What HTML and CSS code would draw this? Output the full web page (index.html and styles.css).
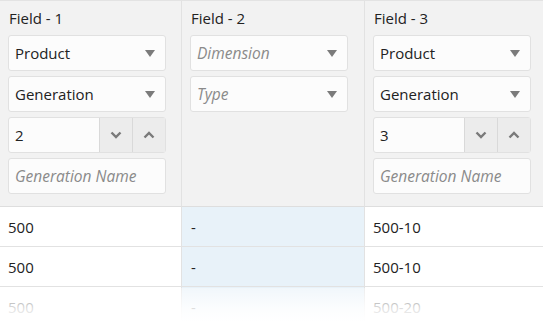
FILE: index.html
```html
<!DOCTYPE html>
<html lang="en">
<head>
  <meta charset="UTF-8">
  <title>Fields</title>
  <link rel="stylesheet" href="styles.css">
</head>
<body>
  <div class="grid">
    <div class="head">
      <div class="title">Field - 1</div>
      <div class="select"><span>Product</span><i class="caret"></i></div>
      <div class="select"><span>Generation</span><i class="caret"></i></div>
      <div class="spin">
        <span class="num">2</span>
        <span class="btn"><svg width="12" height="8" viewBox="0 0 12 8"><path d="M1.5 1.5 L6 6 L10.5 1.5" fill="none" stroke="#7a7a7a" stroke-width="2.4"/></svg></span>
        <span class="btn"><svg width="12" height="8" viewBox="0 0 12 8"><path d="M1.5 6.5 L6 2 L10.5 6.5" fill="none" stroke="#7a7a7a" stroke-width="2.4"/></svg></span>
      </div>
      <div class="select ph"><span>Generation Name</span></div>
    </div>
    <div class="head">
      <div class="title">Field - 2</div>
      <div class="select ph"><span>Dimension</span><i class="caret"></i></div>
      <div class="select ph"><span>Type</span><i class="caret"></i></div>
    </div>
    <div class="head">
      <div class="title">Field - 3</div>
      <div class="select"><span>Product</span><i class="caret"></i></div>
      <div class="select"><span>Generation</span><i class="caret"></i></div>
      <div class="spin">
        <span class="num">3</span>
        <span class="btn"><svg width="12" height="8" viewBox="0 0 12 8"><path d="M1.5 1.5 L6 6 L10.5 1.5" fill="none" stroke="#7a7a7a" stroke-width="2.4"/></svg></span>
        <span class="btn"><svg width="12" height="8" viewBox="0 0 12 8"><path d="M1.5 6.5 L6 2 L10.5 6.5" fill="none" stroke="#7a7a7a" stroke-width="2.4"/></svg></span>
      </div>
      <div class="select ph"><span>Generation Name</span></div>
    </div>

    <div class="cell">500</div>
    <div class="cell mid">-</div>
    <div class="cell">500-10</div>

    <div class="cell">500</div>
    <div class="cell mid">-</div>
    <div class="cell">500-10</div>

    <div class="cell">500</div>
    <div class="cell mid">-</div>
    <div class="cell">500-20</div>
  </div>
  <div class="fade"></div>
</body>
</html>
```

FILE: styles.css
```css
body {
  margin: 0;
  font-family: "Open Sans", "Noto Sans", sans-serif;
  color: #222;
  background: #fff;
  overflow: hidden;
}
.grid {
  display: grid;
  grid-template-columns: 182px 183px 178px;
  border-top: 1px solid #e3e3e3;
}
.head {
  background: #f2f2f2;
  padding: 6px 0 0 8px;
  height: 199px;
  border-right: 1px solid #e2e2e2;
  border-bottom: 1px solid #dedede;
  display: flex;
  flex-direction: column;
  gap: 5px;
}
.head:nth-child(3) {
  border-right: none;
}
.title {
  font-size: 15px;
  height: 23px;
  line-height: 22px;
  padding-left: 1px;
}
.select {
  width: 158px;
  height: 36px;
  box-sizing: border-box;
  border: 1px solid #e1e1e1;
  border-radius: 3px;
  background: #fcfcfc;
  display: flex;
  align-items: center;
  justify-content: space-between;
  padding: 0 10px 0 6px;
  font-size: 15px;
}
.select.ph span {
  font-style: italic;
  color: #8a8a8a;
  font-size: 15.5px;
}
.caret {
  width: 0;
  height: 0;
  border-left: 5px solid transparent;
  border-right: 5px solid transparent;
  border-top: 7px solid #7b7b7b;
}
.spin {
  width: 158px;
  height: 36px;
  box-sizing: border-box;
  border: 1px solid #e1e1e1;
  border-radius: 3px;
  background: #fcfcfc;
  display: flex;
  font-size: 15px;
}
.num {
  flex: 1;
  display: flex;
  align-items: center;
  padding-left: 6px;
}
.btn {
  width: 32px;
  background: #ececec;
  border-left: 1px solid #d9d9d9;
  display: flex;
  align-items: center;
  justify-content: center;
}
.cell {
  height: 40px;
  box-sizing: border-box;
  border-bottom: 1px solid #e2e2e2;
  border-right: 1px solid #e2e2e2;
  display: flex;
  align-items: center;
  padding-left: 8px;
  font-size: 15px;
}
.cell:nth-child(3n) {
  border-right: none;
}
.cell.mid {
  background: #e8f2f9;
  padding-left: 9px;
}
.fade {
  position: absolute;
  left: 0;
  right: 0;
  top: 288px;
  height: 34px;
  background: linear-gradient(rgba(255,255,255,0.4), rgba(255,255,255,0.85) 60%, #fff);
}
```
